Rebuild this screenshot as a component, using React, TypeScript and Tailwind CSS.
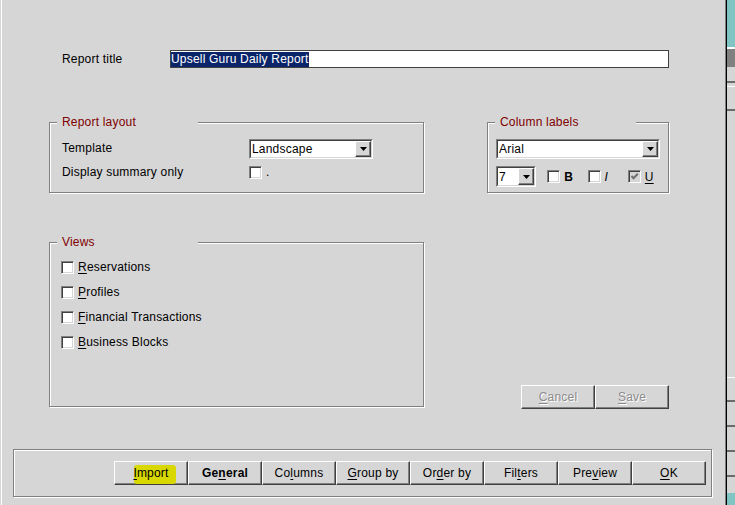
import type { ReactNode } from 'react'

function Mn({ children }: { children: ReactNode }) {
  return <span className="underline underline-offset-[2px]">{children}</span>
}

function Arrow() {
  return (
    <svg width="7" height="4" viewBox="0 0 7 4">
      <path d="M0 0H7L3.5 4Z" fill="#000" />
    </svg>
  )
}

function Check({ checked = false, disabled = false }: { checked?: boolean; disabled?: boolean }) {
  return (
    <span
      className={`flex h-[13px] w-[13px] shrink-0 items-center justify-center border border-t-[#808080] border-l-[#808080] border-b-white border-r-white shadow-[inset_1px_1px_0_#404040,inset_-1px_-1px_0_#d6d6d6] ${
        disabled ? 'bg-[#d6d6d6]' : 'bg-white'
      }`}
    >
      {checked && (
        <svg width="9" height="9" viewBox="0 0 9 9">
          <path d="M1.5 4 L3.5 6.2 L7.8 1.8" fill="none" stroke="#707070" strokeWidth="2" />
        </svg>
      )}
    </span>
  )
}

function Select({ value, className = '' }: { value: string; className?: string }) {
  return (
    <div className={`flex border border-t-[#808080] border-l-[#808080] border-b-white border-r-white bg-white ${className}`}>
      <div className="flex flex-1 border border-t-[#404040] border-l-[#404040] border-b-[#d6d6d6] border-r-[#d6d6d6]">
        <span className="flex flex-1 items-center pl-[1px]">{value}</span>
        <span className="flex w-[16px] items-center justify-center border border-t-white border-l-white border-b-[#404040] border-r-[#404040] bg-[#d6d6d6] shadow-[inset_-1px_-1px_0_#808080]">
          <Arrow />
        </span>
      </div>
    </div>
  )
}

function Group({ title, className = '', children }: { title: string; className?: string; children: ReactNode }) {
  return (
    <div className={`relative border border-[#808080] shadow-[1px_1px_0_#fff,inset_1px_1px_0_#fff] ${className}`}>
      <div className="absolute left-[7px] top-[-9px] h-[16px] w-[141px] bg-[#d6d6d6] pl-[5px] leading-[16px] text-[#800000]">
        {title}
      </div>
      {children}
    </div>
  )
}

function Btn({ children, disabled = false, className = '' }: { children: ReactNode; disabled?: boolean; className?: string }) {
  return (
    <button
      type="button"
      className={`relative flex h-[24px] w-[74px] items-center justify-center border border-t-white border-l-white border-b-[#404040] border-r-[#404040] bg-[#d6d6d6] shadow-[inset_-1px_-1px_0_#808080] ${
        disabled ? 'text-[#8c8c8c] [text-shadow:1px_1px_0_#fff]' : 'text-black'
      } ${className}`}
    >
      {children}
    </button>
  )
}

const views = [
  ['R', 'eservations'],
  ['P', 'rofiles'],
  ['F', 'inancial Transactions'],
  ['B', 'usiness Blocks'],
]

export default function App() {
  return (
    <div className="flex h-[505px] w-[735px] overflow-hidden bg-[#d6d6d6] font-['Liberation_Sans',Arial,sans-serif] text-[12px] tracking-[0.2px] text-black">
      <div className="w-px" />
      <div className="w-px bg-white" />

      <main className="flex flex-1 flex-col">
        <div className="ml-[60px] mt-[50px] flex h-[18px] items-center">
          <span className="w-[108px]">Report title</span>
          <div className="flex h-[18px] w-[499px] items-start border border-[#404040] bg-white pt-px">
            <span className="h-[15px] bg-[#0a246a] leading-[15px] text-white">Upsell Guru Daily Report</span>
          </div>
        </div>

        <div className="ml-[47px] mt-[54px] grid grid-cols-[375px_182px] gap-x-[63px] gap-y-[49px]">
          <Group title="Report layout" className="h-[71px]">
            <div className="flex flex-col gap-[4px] pl-[12px] pt-[15px]">
              <div className="flex h-[20px] items-center">
                <span className="w-[187px]">Template</span>
                <Select value="Landscape" className="mt-[2px] h-[20px] w-[124px]" />
              </div>
              <div className="flex h-[20px] items-center">
                <span className="w-[187px]">Display summary only</span>
                <Check />
                <span className="ml-[4px]">.</span>
              </div>
            </div>
          </Group>

          <Group title="Column labels" className="h-[71px]">
            <div className="flex flex-col pl-[8px] pt-[16px]">
              <Select value="Arial" className="h-[20px] w-[164px]" />
              <div className="mt-[7px] flex h-[21px] items-center">
                <Select value="7" className="mr-[11px] h-[21px] w-[42px]" />
                <div className="flex w-[42px] items-center gap-[4px]">
                  <Check />
                  <span className="font-bold">B</span>
                </div>
                <div className="flex w-[42px] items-center gap-[4px]">
                  <Check />
                  <span className="italic">I</span>
                </div>
                <div className="flex w-[42px] items-center gap-[4px]">
                  <Check checked disabled />
                  <span className="underline underline-offset-[2px]">U</span>
                </div>
              </div>
            </div>
          </Group>

          <Group title="Views" className="h-[165px]">
            <div className="flex flex-col gap-[5px] pl-[11px] pt-[14px]">
              {views.map(([k, rest]) => (
                <div key={k} className="flex h-[20px] items-center gap-[4px]">
                  <Check />
                  <span>
                    <Mn>{k}</Mn>
                    {rest}
                  </span>
                </div>
              ))}
            </div>
          </Group>

          <div className="mt-[143px] flex justify-end">
            <Btn disabled>
              <span>
                <Mn>C</Mn>ancel
              </span>
            </Btn>
            <Btn disabled>
              <span>
                <Mn>S</Mn>ave
              </span>
            </Btn>
          </div>
        </div>

        <div className="ml-[11px] mt-[40px] flex h-[48px] w-[699px] items-center justify-end border border-[#808080] pr-[5px] shadow-[1px_1px_0_#fff,inset_1px_1px_0_#fff]">
          <Btn>
            <span className="absolute left-[19px] top-[3px] h-[19px] w-[42px] rounded-[3px] bg-[#d8d800]" />
            <span className="relative">
              <Mn>I</Mn>mport
            </span>
          </Btn>
          <Btn className="font-bold">
            <span>
              Ge<Mn>n</Mn>eral
            </span>
          </Btn>
          <Btn>
            <span>
              Co<Mn>l</Mn>umns
            </span>
          </Btn>
          <Btn>
            <span>
              <Mn>G</Mn>roup by
            </span>
          </Btn>
          <Btn>
            <span>
              Or<Mn>d</Mn>er by
            </span>
          </Btn>
          <Btn>
            <span>
              Fil<Mn>t</Mn>ers
            </span>
          </Btn>
          <Btn>
            <span>
              Pre<Mn>v</Mn>iew
            </span>
          </Btn>
          <Btn>
            <span>
              <Mn>O</Mn>K
            </span>
          </Btn>
        </div>
      </main>

      <div className="w-px bg-[#808080]" />
      <div className="w-px bg-black" />

      <div className="flex w-[8px] flex-col">
        <div className="h-[47px] bg-[#80c4c4]" />
        <div className="h-[2px] bg-white" />
        <div className="h-[18px] bg-[#808080]" />
        <div className="h-[14px]" />
        <div className="h-[2px] bg-[#6b6b6b]" />
        <div className="h-[3px]" />
        <div className="h-px bg-white" />
        <div className="h-[22px]" />
        <div className="h-[2px] bg-[#6b6b6b]" />
        <div className="flex-1" />
        <div className="h-px bg-white" />
        <div className="h-[22px]" />
        <div className="h-[2px] bg-[#6b6b6b]" />
        <div className="h-[23px]" />
        <div className="h-[2px] bg-[#6b6b6b]" />
        <div className="h-[23px]" />
        <div className="h-[2px] bg-[#6b6b6b]" />
        <div className="h-[23px]" />
        <div className="h-[2px] bg-[#6b6b6b]" />
        <div className="h-[16px]" />
        <div className="h-[12px] bg-[#80c4c4]" />
      </div>
    </div>
  )
}
